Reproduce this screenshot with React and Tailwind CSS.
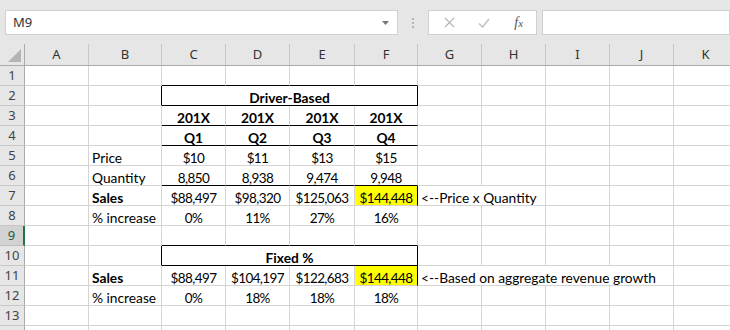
import React from 'react';

const COLS = ['A', 'B', 'C', 'D', 'E', 'F', 'G', 'H', 'I', 'J', 'K'];
const GRID = 'grid grid-cols-[25px_64px_73px_64px_64px_65px_63px_64px_64px_64px_64px_64px]';

// cell specs per row, keyed by column letter
const SHEET = {
  1: { C: { bb: true }, D: { bb: true }, E: { bb: true }, F: { bb: true } },
  2: { B: { rb: true }, C: { t: 'Driver-Based', bold: true, span: 4, rb: true, bb: true } },
  3: {
    C: { t: '201X', bold: true, bb: true },
    D: { t: '201X', bold: true, bb: true },
    E: { t: '201X', bold: true, bb: true },
    F: { t: '201X', bold: true, bb: true },
  },
  4: {
    C: { t: 'Q1', bold: true, bb: true },
    D: { t: 'Q2', bold: true, bb: true },
    E: { t: 'Q3', bold: true, bb: true },
    F: { t: 'Q4', bold: true, bb: true },
  },
  5: { B: { t: 'Price', left: true }, C: { t: '$10', num: true }, D: { t: '$11', num: true }, E: { t: '$13', num: true }, F: { t: '$15', num: true } },
  6: {
    B: { t: 'Quantity', left: true },
    C: { t: '8,850', bb: true, num: true },
    D: { t: '8,938', bb: true, num: true },
    E: { t: '9,474', bb: true, num: true },
    F: { t: '9,948', bb: true, num: true },
  },
  7: {
    B: { t: 'Sales', left: true, bold: true },
    C: { t: '$88,497', num: true },
    D: { t: '$98,320', num: true },
    E: { t: '$125,063', num: true },
    F: { t: '$144,448', yellow: true, rb: true, num: true },
    G: { t: '<--Price x Quantity', left: true, span: 2 },
  },
  8: {
    B: { t: '% increase', left: true },
    C: { t: '0%', num: true },
    D: { t: '11%', num: true },
    E: { t: '27%', num: true },
    F: { t: '16%', num: true },
  },
  9: { C: { bb: true }, D: { bb: true }, E: { bb: true }, F: { bb: true } },
  10: { B: { rb: true }, C: { t: 'Fixed %', bold: true, span: 4, rb: true, bb: true } },
  11: {
    B: { t: 'Sales', left: true, bold: true },
    C: { t: '$88,497', num: true },
    D: { t: '$104,197', num: true },
    E: { t: '$122,683', num: true },
    F: { t: '$144,448', yellow: true, rb: true, num: true },
    G: { t: '<--Based on aggregate revenue growth', left: true, span: 4 },
  },
  12: {
    B: { t: '% increase', left: true },
    C: { t: '0%', num: true },
    D: { t: '18%', num: true },
    E: { t: '18%', num: true },
    F: { t: '18%', num: true },
  },
};

const spanClass = { 1: '', 2: 'col-span-2', 4: 'col-span-4' };

function Cell({ spec = {} }) {
  return (
    <div
      className={`h-[20px] border-r border-b whitespace-nowrap overflow-visible pt-[4px] leading-[16px] text-black ${
        spanClass[spec.span || 1]
      } ${spec.rb ? 'border-r-black' : 'border-r-[#d4d4d4]'} ${spec.bb ? 'border-b-black' : 'border-b-[#d4d4d4]'} ${
        spec.yellow ? 'bg-[#ffff00]' : ''
      } ${spec.bold ? 'font-bold' : ''} ${spec.num ? 'text-[13.5px] tracking-[-0.6px]' : 'text-[13.75px]'} ${
        spec.left ? 'text-left pl-[3px]' : 'text-center'
      }`}
    >
      {spec.t}
    </div>
  );
}

function SheetRow({ n }) {
  const specs = SHEET[n] || {};
  const cells = [];
  let skip = 0;
  COLS.forEach((col) => {
    if (skip > 0) {
      skip--;
      return;
    }
    const spec = specs[col];
    if (spec?.span) skip = spec.span - 1;
    cells.push(<Cell key={col} spec={spec} />);
  });
  const selected = n === 9;
  return (
    <div className={GRID}>
      <div
        className={`h-[20px] border-b border-r flex items-center justify-center text-[13px] font-['Noto_Sans',sans-serif] ${
          selected
            ? 'bg-[#d2d2d2] border-r-[#217346] border-r-2 text-[#1d5d37] border-b-[#bdbdbd]'
            : 'bg-[#e6e6e6] border-r-[#ababab] text-[#444] border-b-[#c8c8c8]'
        }`}
      >
        {n < 14 ? n : ''}
      </div>
      {cells}
    </div>
  );
}

function FormulaBar() {
  return (
    <div className="h-[44px] bg-[#e6e6e6] flex items-start pt-[10px] font-['Noto_Sans',sans-serif]">
      <div className="ml-[5px] w-[393px] h-[25px] bg-white border border-[#d0d0d0] flex items-center justify-between pl-[7px] pr-[8px]">
        <span className="text-[13px] text-[#333]">M9</span>
        <svg width="7" height="4" viewBox="0 0 7 4">
          <path d="M0 0h7L3.5 4z" fill="#777" />
        </svg>
      </div>
      <div className="w-[30px] h-[25px] flex flex-col items-center justify-center gap-[2px]">
        <span className="w-[2px] h-[2px] bg-[#b4b4b4]" />
        <span className="w-[2px] h-[2px] bg-[#b4b4b4]" />
        <span className="w-[2px] h-[2px] bg-[#b4b4b4]" />
      </div>
      <div className="w-[109px] h-[25px] bg-white border border-[#d0d0d0] flex items-center pl-[3px]">
        <div className="w-[35px] flex justify-center">
          <svg width="11" height="11" viewBox="0 0 11 11">
            <path d="M1 1l9 9M10 1l-9 9" stroke="#b8b8b8" strokeWidth="1.3" />
          </svg>
        </div>
        <div className="w-[35px] flex justify-center">
          <svg width="12" height="10" viewBox="0 0 12 10">
            <path d="M1 5.5l3.5 3.5L11 1" stroke="#c4c4c4" strokeWidth="1.6" fill="none" />
          </svg>
        </div>
        <div className="w-[35px] flex justify-center">
          <span className="font-['Liberation_Serif',serif] italic text-[14px] text-[#555] leading-none">
            f<span className="text-[11px]">x</span>
          </span>
        </div>
      </div>
      <div className="ml-[5px] flex-1 h-[25px] bg-white border border-[#d0d0d0]" />
    </div>
  );
}

function HeaderRow() {
  return (
    <div className={`${GRID} h-[22px] bg-[#e6e6e6] border-b border-[#ababab] font-['Noto_Sans',sans-serif]`}>
      <div className="border-r border-[#ababab] flex items-end justify-end pr-[3px] pb-[3px]">
        <svg width="13" height="13" viewBox="0 0 13 13">
          <path d="M13 0V13H0z" fill="#b4b4b4" />
        </svg>
      </div>
      {COLS.map((c) => (
        <div key={c} className="border-r border-[#c8c8c8] flex items-center justify-center text-[13px] text-[#333]">
          {c}
        </div>
      ))}
    </div>
  );
}

export default function App() {
  const rowNums = Array.from({ length: 14 }, (_, i) => i + 1);
  return (
    <div className="w-[730px] h-[330px] overflow-hidden bg-white font-['Lato',sans-serif]">
      <FormulaBar />
      <HeaderRow />
      {rowNums.map((n) => (
        <SheetRow key={n} n={n} />
      ))}
    </div>
  );
}
